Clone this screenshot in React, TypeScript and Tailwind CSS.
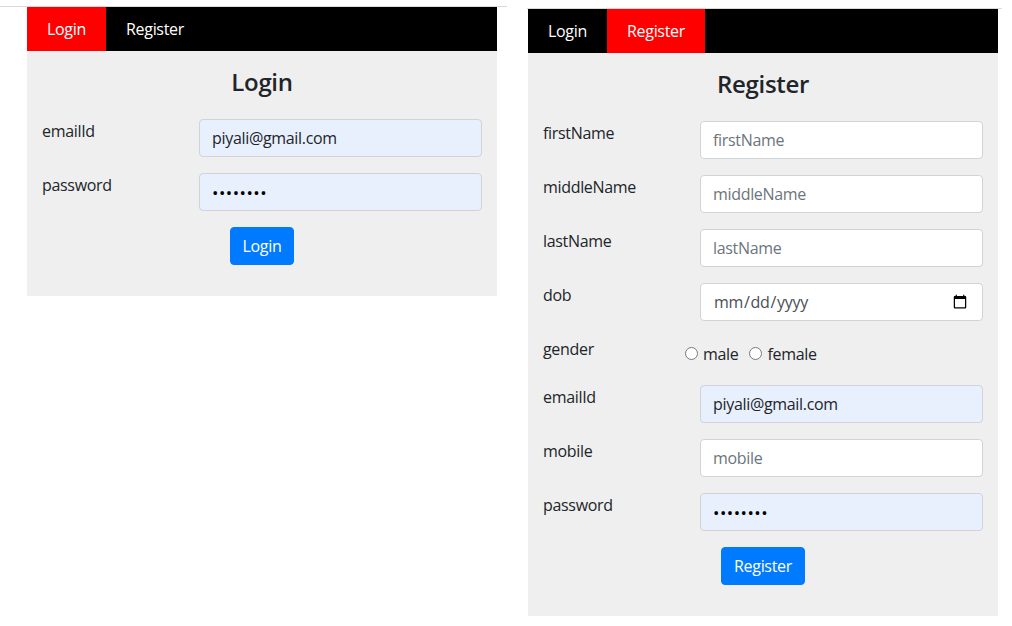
import React from 'react';

const Nav = ({ active }: { active: 'login' | 'register' }) => (
  <div className="flex h-[44px] bg-black text-[16px] text-white">
    <div className={active === 'login' ? 'flex w-[79px] items-center justify-center bg-[#ff0000]' : 'flex w-[79px] items-center justify-center'}>
      Login
    </div>
    <div className={active === 'register' ? 'flex w-[98px] items-center justify-center bg-[#ff0000]' : 'flex w-[98px] items-center justify-center'}>
      Register
    </div>
  </div>
);

type FieldProps = {
  label: string;
  type?: string;
  value?: string;
  placeholder?: string;
  filled?: boolean;
};

const Field = ({ label, type = 'text', value, placeholder, filled }: FieldProps) => {
  let cls = 'h-[38px] w-full rounded-[4px] border border-[#ced4da] bg-white px-3 text-[16px] text-[#495057] outline-none placeholder:text-[#6c757d]';
  if (filled) cls = 'h-[38px] w-full rounded-[4px] border border-[#ced4da] bg-[#e8f0fe] px-3 text-[16px] text-[#212529] outline-none';
  if (type === 'password') cls = 'h-[38px] w-full rounded-[4px] border border-[#ced4da] bg-[#e8f0fe] px-3 text-[17px] tracking-[0.5px] text-black outline-none';

  return (
    <div className="mb-4 grid grid-cols-[157px_1fr]">
      <label className="leading-6 text-[#212529]">{label}</label>
      <input type={type} defaultValue={value} placeholder={placeholder} className={cls} />
    </div>
  );
};

const Button = ({ children }: { children: React.ReactNode }) => (
  <div className="flex justify-center">
    <button className="h-[38px] rounded-[4px] border border-[#007bff] bg-[#007bff] px-3 leading-6 text-white">
      {children}
    </button>
  </div>
);

const LoginPanel = () => (
  <div className="ml-[27px] w-[470px]">
    <Nav active="login" />
    <div className="bg-[#efefef] px-[15px] pb-[31px] pt-[16px]">
      <h3 className="mb-[22px] text-center text-[24px] font-semibold leading-[30px] text-[#212529]">Login</h3>
      <Field label="emailId" value="piyali@gmail.com" filled />
      <Field label="password" type="password" value="12345678" />
      <Button>Login</Button>
    </div>
  </div>
);

const RegisterPanel = () => (
  <div className="ml-[1px] w-[470px]">
    <Nav active="register" />
    <div className="bg-[#efefef] px-[15px] pb-[31px] pt-[16px]">
      <h3 className="mb-[22px] text-center text-[24px] font-semibold leading-[30px] text-[#212529]">Register</h3>
      <Field label="firstName" placeholder="firstName" />
      <Field label="middleName" placeholder="middleName" />
      <Field label="lastName" placeholder="lastName" />
      <Field label="dob" type="date" />
      <div className="mb-4 grid h-[32px] grid-cols-[157px_1fr]">
        <label className="leading-6 text-[#212529]">gender</label>
        <div className="-ml-[15px] flex items-center gap-[5px] pt-[1px] text-[#212529]">
          <input type="radio" name="gender" className="m-0 h-[13px] w-[13px]" />
          <span className="mr-[6px]">male</span>
          <input type="radio" name="gender" className="m-0 h-[13px] w-[13px]" />
          <span>female</span>
        </div>
      </div>
      <Field label="emailId" value="piyali@gmail.com" filled />
      <Field label="mobile" placeholder="mobile" />
      <Field label="password" type="password" value="12345678" />
      <Button>Register</Button>
    </div>
  </div>
);

export default function App() {
  return (
    <div className="flex h-[626px] w-[1012px] items-start bg-white font-['Open_Sans',sans-serif] text-[16px] tracking-[-0.02em]">
      <div className="mt-[6px] w-[507px] border-t border-[#dadada]">
        <LoginPanel />
      </div>
      <div className="ml-[20px] mt-[8px] w-[475px] border-t border-[#dadada]">
        <RegisterPanel />
      </div>
    </div>
  );
}
